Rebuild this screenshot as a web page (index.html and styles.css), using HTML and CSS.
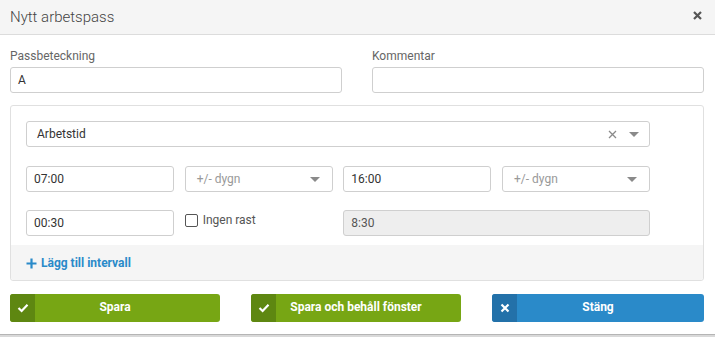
FILE: index.html
```html
<!DOCTYPE html>
<html lang="sv">
<head>
<meta charset="utf-8">
<title>Nytt arbetspass</title>
<link rel="stylesheet" href="styles.css">
</head>
<body>
<div class="modal">
  <div class="modal-header">
    <span class="modal-title">Nytt arbetspass</span>
    <span class="close">
      <svg width="9" height="9" viewBox="0 0 9 9"><path d="M1 1 L8 8 M8 1 L1 8" stroke="#555" stroke-width="2.2" fill="none"/></svg>
    </span>
  </div>
  <div class="modal-body">
    <div class="top-row">
      <div class="field">
        <label class="lbl">Passbeteckning</label>
        <div class="input">A</div>
      </div>
      <div class="field">
        <label class="lbl">Kommentar</label>
        <div class="input"></div>
      </div>
    </div>
    <div class="panel">
      <div class="panel-body">
        <div class="select wide">
          <span class="sel-text dark">Arbetstid</span>
          <span class="sel-clear">
            <svg width="9" height="9" viewBox="0 0 9 9"><path d="M1 1 L8 8 M8 1 L1 8" stroke="#8a8a8a" stroke-width="1.3" fill="none"/></svg>
          </span>
          <span class="caret"></span>
        </div>
        <div class="grid">
          <div class="input">07:00</div>
          <div class="select"><span class="sel-text">+/- dygn</span><span class="caret"></span></div>
          <div class="input">16:00</div>
          <div class="select"><span class="sel-text">+/- dygn</span><span class="caret"></span></div>
        </div>
        <div class="grid grid-last">
          <div class="input">00:30</div>
          <label class="check"><span class="box"></span>Ingen rast</label>
          <div class="input readonly span2">8:30</div>
        </div>
      </div>
      <div class="panel-footer">
        <a class="add-link">
          <svg width="11" height="11" viewBox="0 0 11 11"><path d="M5.5 0.5 V10.5 M0.5 5.5 H10.5" stroke="#2a8ac9" stroke-width="2.2" fill="none"/></svg>
          Lägg till intervall
        </a>
      </div>
    </div>
    <div class="buttons">
      <button class="btn green"><span class="ico">
        <svg width="12" height="10" viewBox="0 0 12 10"><path d="M1.5 5 L4.6 8 L10.5 1.8" stroke="#fff" stroke-width="2.2" fill="none"/></svg>
      </span><span class="btn-text">Spara</span></button>
      <button class="btn green"><span class="ico">
        <svg width="12" height="10" viewBox="0 0 12 10"><path d="M1.5 5 L4.6 8 L10.5 1.8" stroke="#fff" stroke-width="2.2" fill="none"/></svg>
      </span><span class="btn-text">Spara och behåll fönster</span></button>
      <button class="btn blue"><span class="ico">
        <svg width="10" height="10" viewBox="0 0 10 10"><path d="M1.5 1.5 L8.5 8.5 M8.5 1.5 L1.5 8.5" stroke="#fff" stroke-width="2.2" fill="none"/></svg>
      </span><span class="btn-text">Stäng</span></button>
    </div>
  </div>
</div>
</body>
</html>
```
FILE: styles.css
```css
* { box-sizing: border-box; }
html, body { margin: 0; padding: 0; }
body {
  background: #d9d9d9;
  font-family: Roboto, "Liberation Sans", Arial, sans-serif;
  font-size: 12px;
  color: #333;
  width: 715px;
  height: 337px;
  overflow: hidden;
}
.modal {
  background: #fff;
  height: 335px;
  border-bottom: 1px solid #b5b5b5;
}
.modal-header {
  height: 35px;
  background: #f5f5f5;
  border-bottom: 1px solid #dcdcdc;
  display: flex;
  align-items: center;
  justify-content: space-between;
  padding: 0 13px 0 10px;
}
.modal-title {
  font-size: 15px;
  font-weight: 300;
  color: #444;
  margin-top: -1px;
}
.close {
  display: flex;
  margin-top: -4px;
}
.modal-body {
  padding: 14px 11px 0 10px;
}
.top-row {
  display: grid;
  grid-template-columns: 332px 332px;
  column-gap: 30px;
}
.lbl {
  display: block;
  font-size: 12px;
  line-height: 15px;
  color: #666;
  margin-bottom: 3px;
}
.input {
  height: 26px;
  border: 1px solid #cfcfcf;
  border-radius: 3px;
  background: #fff;
  padding: 0 7px;
  line-height: 24px;
  font-size: 12px;
  color: #333;
}
.input.readonly {
  background: #eee;
  color: #555;
}
.panel {
  margin-top: 12px;
  border: 1px solid #e0e0e0;
  border-radius: 3px;
  width: 694px;
}
.panel-body {
  padding: 15px 0 9px 15px;
}
.select {
  height: 26px;
  border: 1px solid #cfcfcf;
  border-radius: 3px;
  background: #fff;
  display: flex;
  align-items: center;
  padding: 0 12px 0 11px;
}
.select.wide {
  width: 624px;
  padding-left: 10px;
  padding-right: 10px;
}
.sel-text {
  flex: 1;
  color: #999;
}
.sel-text.dark { color: #333; }
.sel-clear {
  display: flex;
  margin-right: 12px;
}
.caret {
  width: 0;
  height: 0;
  border-left: 5px solid transparent;
  border-right: 5px solid transparent;
  border-top: 5px solid #8a8a8a;
}
.grid {
  display: grid;
  width: 624px;
  grid-template-columns: 148px 148px 148px 148px;
  column-gap: 10.66px;
  margin-top: 19px;
}
.grid-last { margin-top: 18px; }
.span2 { grid-column: span 2; }
.check {
  display: flex;
  align-items: center;
  height: 20px;
  color: #555;
  font-size: 12px;
}
.box {
  width: 13px;
  height: 13px;
  border: 1px solid #555;
  border-radius: 2px;
  margin-right: 5px;
  background: #fff;
}
.panel-footer {
  background: #f5f5f5;
  height: 35px;
  display: flex;
  align-items: center;
  padding-left: 15px;
  border-radius: 0 0 3px 3px;
}
.add-link {
  display: flex;
  align-items: center;
  gap: 4px;
  color: #2a8ac9;
  font-weight: 700;
  font-size: 12px;
  margin-top: 1px;
}
.buttons {
  display: grid;
  grid-template-columns: 210px 210px 212px;
  column-gap: 31px;
  margin-top: 13px;
}
.btn {
  height: 28px;
  border: none;
  border-radius: 3px;
  padding: 0;
  display: flex;
  align-items: stretch;
  font-family: Roboto, "Liberation Sans", Arial, sans-serif;
  font-size: 12px;
  font-weight: 700;
  color: #fff;
  overflow: hidden;
}
.btn .ico {
  width: 25px;
  display: flex;
  align-items: center;
  justify-content: center;
}
.btn-text {
  flex: 1;
  display: flex;
  align-items: center;
  justify-content: center;
  padding-right: 25px;
  padding-bottom: 2px;
}
.green { background: #77a614; }
.green .ico { background: #5e8711; }
.blue { background: #2a8ac9; }
.blue .ico { background: #2371a9; }
```
